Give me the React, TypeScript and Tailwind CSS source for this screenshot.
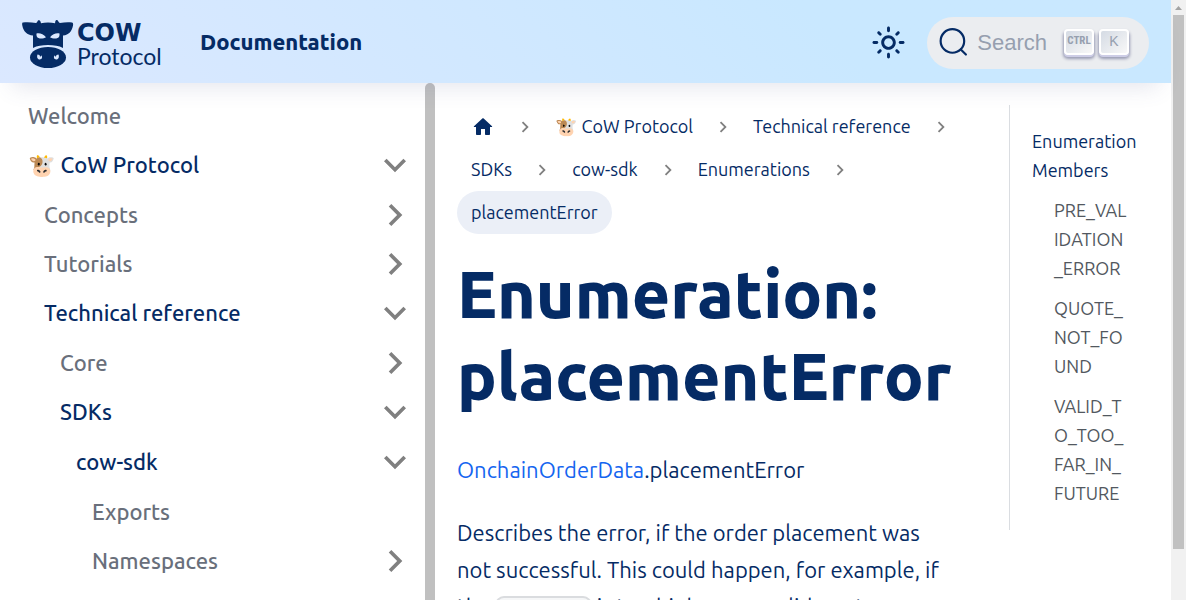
import React from "react";

type Item = { label: string; open?: boolean; leaf?: boolean; children?: Item[] };

const menu: Item[] = [
  { label: "Welcome", leaf: true },
  {
    label: "🐮 CoW Protocol",
    open: true,
    children: [
      { label: "Concepts" },
      { label: "Tutorials" },
      {
        label: "Technical reference",
        open: true,
        children: [
          { label: "Core" },
          {
            label: "SDKs",
            open: true,
            children: [
              {
                label: "cow-sdk",
                open: true,
                children: [{ label: "Exports", leaf: true }, { label: "Namespaces" }],
              },
            ],
          },
        ],
      },
    ],
  },
];

const toc = ["PRE_VALIDATION_ERROR", "QUOTE_NOT_FOUND", "VALID_TO_TOO_FAR_IN_FUTURE"];

function Chevron({ className }: { className: string }) {
  return (
    <svg viewBox="0 0 24 24" fill="#808080" className={className} aria-hidden="true">
      <path d="M8.59 16.59 13.17 12 8.59 7.41 10 6l6 6-6 6z" />
    </svg>
  );
}

function Menu({ items, nested }: { items: Item[]; nested?: boolean }) {
  return (
    <ul className={nested ? "mt-px pl-4" : ""}>
      {items.map((item) => (
        <li key={item.label}>
          <div className="flex h-[49px] items-center justify-between">
            <a
              href="#"
              className={
                item.open
                  ? "text-[22px] leading-7 font-[540] text-[#052b65]"
                  : "text-[22px] leading-7 font-[540] text-[#696f7b]"
              }
            >
              {item.label}
            </a>
            {!item.leaf && (
              <button type="button" aria-label={"Toggle " + item.label} aria-expanded={!!item.open}>
                <Chevron className={item.open ? "size-11 rotate-90" : "size-11"} />
              </button>
            )}
          </div>
          {item.children && <Menu items={item.children} nested />}
        </li>
      ))}
    </ul>
  );
}

function CowMark() {
  return (
    <svg viewBox="0 0 52 48" className="h-12 w-[52px]" aria-hidden="true">
      <path
        fill="#052b65"
        d="M1 2.500C0 2.500 0 4 .3 5.500C1.500 11.500 5 15 11 15.500V28C15 25.700 20 25 26 25s11 .7 15 3V15.500C47 15 50 11 51 5.500c.3-1.500 0-3-1-3-4-.4-8-.2-12 .6C36.500 2.500 36.500 1 35.500.2c-1-.4-2 .3-2.200 1.200L33 3.200c-4-.9-10-.9-14 0l-.5-1.800C18 .3 17 0 16.200.3 15.200 1 15.500 2.500 14 3.100 10 2.300 5 2.100 1 2.500Z"
      />
      <path fill="#dbe8ff" d="M14.500 13.500c3-.8 7 .5 9.500 3.800-2.500 1.500-8 2-9.200-.8-.4-1-.4-2-.3-3ZM37.500 13.500c-3-.8-7 .5-9.500 3.800 2.500 1.500 8 2 9.200-.8.4-1 .4-2 .3-3Z" />
      <ellipse cx="26" cy="37.500" rx="18" ry="10.500" fill="#052b65" />
      <path
        fill="#dbe8ff"
        d="M15.500 34.500c-1 2.500 0 5 2.200 5 2.300 0 3-2.200 1.800-4.200-.3 1-.8 1.400-1.500 1.200 0-1.300-.9-1.900-2.500-2ZM36.500 34.500c1 2.500 0 5-2.200 5-2.300 0-3-2.200-1.800-4.200.3 1 .8 1.400 1.500 1.200 0-1.300.9-1.900 2.500-2Z"
      />
    </svg>
  );
}

function Crumb({ children }: { children: React.ReactNode }) {
  return (
    <li className="flex items-center">
      <a href="#" className="flex h-[43px] items-center px-[14px]">
        {children}
      </a>
      <span className="flex w-8 justify-center">
        <Chevron className="size-[22px]" />
      </span>
    </li>
  );
}

const keycap =
  "flex h-[26px] w-[30px] items-center justify-center rounded-[4px] border-2 border-white bg-gradient-to-br from-[#d5dbe4] to-[#f8f8f8] text-[#969faf] shadow-[0_2px_0_#cdcde6,0_3px_3px_1px_rgba(30,35,90,0.4)]";

export default function App() {
  return (
    <div className="flex h-screen overflow-hidden bg-white font-['Ubuntu','Noto_Sans','Noto_Color_Emoji',sans-serif] text-[#052b65]">
      <div className="flex min-w-0 flex-1 flex-col">
        <header className="relative z-10 flex h-[83px] shrink-0 items-center justify-between bg-linear-45 from-[#dbe8ff] to-[#c9e8ff] to-70% px-[22px] pt-[2px] shadow-[0_16px_22px_-12px_rgba(90,95,140,0.16)]">
          <div className="flex items-center gap-[29px]">
            <a href="#" className="flex items-center gap-[3px] pt-[2px]" aria-label="CoW Protocol">
              <CowMark />
              <span className="flex w-[94px] flex-col">
                <span className="font-['DejaVu_Sans',sans-serif] text-[24px] leading-[24px] font-bold">COW</span>
                <span className="font-['Lato',sans-serif] text-[23px] leading-[22px]">Protocol</span>
              </span>
            </a>
            <a href="#" className="pb-[2px] text-[22px] font-extrabold">Documentation</a>
          </div>
          <div className="flex items-center gap-[21px]">
            <button type="button" aria-label="Switch between dark and light mode">
              <svg viewBox="0 0 24 24" className="size-[35px]" fill="#052b65" aria-hidden="true">
                <path d="M12,9c1.650,0,3,1.350,3,3s-1.350,3-3,3s-3-1.350-3-3S10.350,9,12,9 M12,7c-2.760,0-5,2.240-5,5s2.240,5,5,5s5-2.240,5-5 S14.760,7,12,7L12,7z M2,13l2,0c0.550,0,1-0.450,1-1s-0.450-1-1-1l-2,0c-0.550,0-1,0.450-1,1S1.450,13,2,13z M20,13l2,0c0.550,0,1-0.450,1-1 s-0.450-1-1-1l-2,0c-0.550,0-1,0.450-1,1S19.450,13,20,13z M11,2v2c0,0.550,0.450,1,1,1s1-0.450,1-1V2c0-0.550-0.450-1-1-1S11,1.450,11,2z M11,20v2c0,0.550,0.450,1,1,1s1-0.450,1-1v-2c0-0.550-0.450-1-1-1S11,19.450,11,20z M5.990,4.580c-0.390-0.390-1.030-0.390-1.410,0 c-0.390,0.390-0.390,1.030,0,1.410l1.060,1.060c0.390,0.390,1.030,0.390,1.410,0s0.390-1.030,0-1.410L5.990,4.580z M18.360,16.950 c-0.390-0.390-1.030-0.390-1.410,0c-0.390,0.390-0.390,1.030,0,1.410l1.060,1.060c0.390,0.390,1.030,0.390,1.410,0c0.390-0.390,0.390-1.030,0-1.410 L18.360,16.950z M19.420,5.990c0.390-0.390,0.390-1.030,0-1.410c-0.390-0.390-1.030-0.390-1.410,0l-1.060,1.060c-0.390,0.390-0.390,1.030,0,1.410 s1.030,0.390,1.410,0L19.420,5.990z M7.050,18.360c0.390-0.390,0.390-1.030,0-1.410c-0.390-0.390-1.030-0.390-1.410,0l-1.060,1.060 c-0.390,0.390-0.390,1.030,0,1.410s1.030,0.390,1.410,0L7.050,18.360z" />
              </svg>
            </button>
            <button
              type="button"
              className="flex h-[52px] items-center rounded-full bg-[#ebedf0] pr-5 pl-[11px] font-['Liberation_Sans',sans-serif]"
            >
              <svg viewBox="0 0 20 20" className="size-[31px]" fill="none" stroke="#052b65" strokeWidth="1.400" strokeLinecap="round" aria-hidden="true">
                <circle cx="9.300" cy="9" r="7.600" />
                <path d="m14.700 14.500 3.300 3.300" />
              </svg>
              <span className="pl-2 text-[22px] text-[#969faf]">Search</span>
              <span className="flex gap-[5px] pb-[2px] pl-[17px]">
                <kbd className={keycap + " font-['Liberation_Sans_Narrow','Roboto_Condensed','Roboto',sans-serif] text-[11px] font-bold"}>CTRL</kbd>
                <kbd className={keycap + " font-['Liberation_Sans',sans-serif] text-[14px]"}>K</kbd>
              </span>
            </button>
          </div>
        </header>

        <div className="flex min-h-0 flex-1">
          <nav aria-label="Docs sidebar" className="flex w-[435px] shrink-0 overflow-hidden">
            <div className="flex-1 pt-2 pr-2 pl-7">
              <Menu items={menu} />
            </div>
            <div className="w-[10px] rounded-t-full bg-[#c0c0c0]" />
          </nav>

          <main className="grid min-w-0 flex-1 grid-cols-4 overflow-hidden pt-[22px]">
            <article className="col-span-3 px-[22px]">
              <nav aria-label="Breadcrumbs">
                <ul className="flex flex-wrap text-[18px]">
                  <Crumb>
                    <svg viewBox="0 0 24 24" className="size-6" fill="#052b65" role="img" aria-label="Home page">
                      <path d="M10 19v-5h4v5c0 .55.45 1 1 1h3c.55 0 1-.45 1-1v-7h1.700c.46 0 .68-.57.33-.87L12.670 3.600c-.38-.34-.96-.34-1.340 0l-8.360 7.530c-.34.3-.13.87.33.87H5v7c0 .55.45 1 1 1h3c.55 0 1-.45 1-1z" />
                    </svg>
                  </Crumb>
                  <Crumb>🐮 CoW Protocol</Crumb>
                  <Crumb>Technical reference</Crumb>
                  <Crumb>SDKs</Crumb>
                  <Crumb>cow-sdk</Crumb>
                  <Crumb>Enumerations</Crumb>
                  <li className="flex h-[43px] items-center rounded-full bg-[#ebeff7] px-[14px]">placementError</li>
                </ul>
              </nav>
              <h1 className="mt-[18px] text-[66px] leading-[82px] font-extrabold">
                Enumeration:
                <br />
                placementError
              </h1>
              <p className="mt-[35px] text-[22px] leading-[37px] font-[450]">
                <a href="#" className="text-[#1565f0]">OnchainOrderData</a>.placementError
              </p>
              <p className="mt-[26px] pr-3 text-[22px] leading-[37px] font-[450]">
                Describes the error, if the order placement was not successful. This could happen, for example, if the{" "}
                <code className="rounded-[9px] border-2 border-[#dadcdf] bg-[#f6f7f8] px-[2px] font-['Liberation_Mono',monospace] text-[21px]">
                  validTo
                </code>{" "}
                is too high, or no valid quote was found or generated.
              </p>
            </article>
            <aside className="px-[22px] text-[18px] leading-[29px]">
              <div className="border-l border-[#dadde1] pt-[22px] pr-[10px] pb-[22px] pl-[22px]">
                <a href="#">Enumeration Members</a>
                <ul className="pr-[10px] pl-[22px] text-[#525860]">
                  {toc.map((t) => (
                    <li key={t} className="mt-[11px] break-all">
                      <a href="#">{t}</a>
                    </li>
                  ))}
                </ul>
              </div>
            </aside>
          </main>
        </div>
      </div>

      <div className="flex w-[15px] shrink-0 flex-col bg-[#f1f1f1]" aria-hidden="true">
        <svg viewBox="0 0 15 15" className="size-[15px]" fill="#a3a3a3">
          <path d="M4 10 7.500 6 11 10z" />
        </svg>
        <div className="mx-0.5 h-[89%] bg-[#c1c1c1]" />
      </div>
    </div>
  );
}
